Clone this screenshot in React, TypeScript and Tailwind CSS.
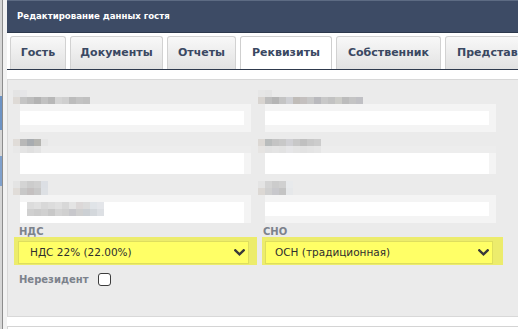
import React from "react";

function Blocks({ cells }: { cells: string[] }) {
  return (
    <div className="flex shrink-0">
      {cells.map((c, i) => (
        <div key={i} className={"w-[7px] h-[7px] " + c} />
      ))}
    </div>
  );
}

const L1a = ["bg-[#e4e4e4]", "bg-[#e6e6e8]"];
const L1b = ["bg-[#dedad6]", "bg-[#c5c5c5]", "bg-[#bdbdbd]", "bg-[#b3b3b3]", "bg-[#c1c1c1]", "bg-[#b7b7b7]", "bg-[#d4d4d4]", "bg-[#cfcfcf]", "bg-[#bcbcbc]", "bg-[#c3c3c3]", "bg-[#c0c0c0]"];
const L2a = ["bg-[#e0dcd8]", "bg-[#b8b8b8]", "bg-[#a8acb0]", "bg-[#b4b4b0]", "bg-[#e6e6e6]"];
const L2b = ["bg-[#e8e8e8]", "bg-[#e4e4e4]", "bg-[#e0e0e0]", "bg-[#e4e4e4]"];
const L3a = ["bg-[#e4e4e4]", "bg-[#d4d4d4]", "bg-[#cccccc]", "bg-[#d0d0d0]", "bg-[#dcdfe4]"];
const L3b = ["bg-[#e0dcd8]", "bg-[#c8c8c8]", "bg-[#c4c0c0]", "bg-[#c8c8c8]", "bg-[#dde0e4]"];
const T3a = ["bg-[#dcdcdc]", "bg-[#e0e0e0]", "bg-[#d8d8d8]", "bg-[#dcdcdc]", "bg-[#e0e0e0]", "bg-[#d8d8d8]", "bg-[#e4e4e4]", "bg-[#dcd8d8]", "bg-[#dcdcdc]", "bg-[#e0e4e8]", "bg-[#e4e6ea]"];
const T3b = ["bg-[#d0d0d0]", "bg-[#cccccc]", "bg-[#d0d0d0]", "bg-[#c8c8c8]", "bg-[#d4d4d4]", "bg-[#d0d0d0]", "bg-[#c8c8cc]", "bg-[#d0d0d0]", "bg-[#ccd0d4]", "bg-[#d4d8dc]", "bg-[#dde0e4]"];

const R1a = ["bg-[#e6e6e6]", "bg-[#e4e4e4]"];
const R1b = ["bg-[#d8d4d0]", "bg-[#bebebe]", "bg-[#b5b5b5]", "bg-[#c4c4c4]", "bg-[#cfd0d4]", "bg-[#c0bcb8]", "bg-[#c4c0bf]", "bg-[#c8c8c8]", "bg-[#b9b9bd]", "bg-[#c8c8c8]", "bg-[#c2c2c2]", "bg-[#ccccc8]", "bg-[#bcbcbc]", "bg-[#c4c4c4]", "bg-[#c0c0c4]"];
const R2a = ["bg-[#dcd8d4]", "bg-[#b9bcbc]", "bg-[#c4c4c4]", "bg-[#c8c8c8]", "bg-[#d0d0d4]", "bg-[#c8c8c8]", "bg-[#c0c0c0]", "bg-[#c8c8c8]", "bg-[#cccccc]"];
const R2b = ["bg-[#e6e4e2]", "bg-[#e2e2e2]", "bg-[#e4e4e4]", "bg-[#e2e2e2]", "bg-[#e6e6e8]", "bg-[#e4e4e4]", "bg-[#e2e2e2]", "bg-[#e4e4e4]", "bg-[#e6e6e6]"];
const R3a = ["bg-[#e4e4e4]", "bg-[#d4d4d4]", "bg-[#cccccc]", "bg-[#d0d0d0]", "bg-[#e8eaec]"];
const R3b = ["bg-[#dcd8d4]", "bg-[#d0d0d0]", "bg-[#c8c8cc]", "bg-[#c4c4c4]", "bg-[#e6e8ea]"];

function Chevron() {
  return (
    <svg width="11" height="7" viewBox="0 0 11 7" className="shrink-0">
      <path d="M1.3 1.3 L5.5 5.3 L9.7 1.3" fill="none" stroke="#3a3a3a" strokeWidth="2.4" strokeLinecap="square" />
    </svg>
  );
}

function Tab({ label, w, active }: { label: string; w: string; active?: boolean }) {
  if (active) {
    return (
      <div className={"relative z-10 -mb-px h-[34px] shrink-0 rounded-t-[3px] border border-b-0 border-[#cfcfcf] bg-white flex items-center justify-center text-[11px] font-bold text-[#3a4862] " + w}>
        {label}
      </div>
    );
  }
  return (
    <div className={"h-[33px] shrink-0 rounded-t-[3px] border border-b-0 border-[#d2d2d2] bg-gradient-to-b from-[#f8f8f8] to-[#e2e2e2] flex items-center text-[11px] font-bold text-[#3a4862] " + w}>
      {label}
    </div>
  );
}

export default function App() {
  return (
    <div className="w-[518px] h-[329px] bg-white flex overflow-hidden font-['DejaVu_Sans',Verdana,sans-serif]">
      {/* left page background strip */}
      <div className="w-[7px] h-full shrink-0 flex">
        <div className="w-[2px] h-full bg-[#d6d6d6] flex flex-col">
          <div className="h-[96px]" />
          <div className="h-[34px] bg-[#6d93c4]" />
          <div className="h-[26px]" />
          <div className="h-[30px] bg-[#7fa0cc]" />
        </div>
        <div className="w-px h-full bg-[#8c8c8c]" />
        <div className="w-[4px] h-full bg-[#f2f2f2]" />
      </div>

      <div className="flex-1 min-w-0 flex flex-col">
        {/* header */}
        <div className="h-[33px] shrink-0 bg-[#3d4b65] border-t border-t-[#5d6b83] border-b border-b-[#2c384c] flex items-center pl-[10px]">
          <span className="text-[8.6px] font-bold text-white leading-none">Редактирование данных гостя</span>
        </div>
        <div className="h-[3px] shrink-0" />

        {/* tabs */}
        <div className="h-[34px] shrink-0 border-b border-[#2f3a4d] flex items-end gap-[4px] pl-[3px] overflow-hidden">
          <Tab label="Гость" w="w-[56px] justify-center" />
          <Tab label="Документы" w="w-[93px] justify-center" />
          <Tab label="Отчеты" w="w-[69px] justify-center" />
          <Tab label="Реквизиты" w="w-[92px]" active />
          <Tab label="Собственник" w="w-[105px] justify-center" />
          <Tab label="Представитель" w="w-[110px] pl-[11px]" />
        </div>
        <div className="h-[9px] shrink-0" />

        {/* panel */}
        <div className="h-[238px] shrink-0 border border-[#d8d8d8] border-r-0 bg-[#ebebeb] pl-[5px] pt-[10px] flex">
          {/* left column */}
          <div className="w-[245px] shrink-0 flex flex-col">
            <Blocks cells={L1a} />
            <Blocks cells={L1b} />
            <div className="ml-[7px] w-[231px] h-[28px] bg-[#f4f4f4] pt-[7px]">
              <div className="w-[224px] h-[14px] bg-white" />
            </div>
            <div className="h-[7px]" />
            <Blocks cells={L2a} />
            <div className="flex h-[7px]">
              <Blocks cells={L2b} />
              <div className="w-[210px] h-[7px] bg-[#ededed]" />
            </div>
            <div className="ml-[7px] w-[231px] h-[21px] bg-[#f4f4f4] flex">
              <div className="w-[224px] h-[21px] bg-white" />
            </div>
            <div className="h-[7px]" />
            <Blocks cells={L3a} />
            <Blocks cells={L3b} />
            <div className="ml-[7px] w-[231px] h-[7px] bg-[#f4f4f4]" />
            <div className="ml-[7px] w-[231px] h-[21px] bg-[#f4f4f4] flex">
              <div className="w-[224px] h-[21px] bg-white pl-[7px]">
                <Blocks cells={T3a} />
                <Blocks cells={T3b} />
              </div>
            </div>
            <div className="h-[4px]" />
            <div className="ml-[6px] h-[10px] leading-[10px] text-[10px] font-bold text-[#7c828c]">НДС</div>
            <div className="ml-[1px] w-[243px] h-[28px] bg-[#ecec6c] pl-[4px] pt-[4px]">
              <div className="w-[231px] h-[23px] bg-[#ffff66] border border-[#dede5e] flex items-center justify-between pl-[11px] pr-[3px]">
                <span className="text-[10.5px] text-[#2e2e2e] leading-none">НДС 22% (22.00%)</span>
                <Chevron />
              </div>
            </div>
            <div className="mt-[8px] ml-[6px] flex items-center gap-[10px]">
              <span className="text-[10px] font-bold text-[#7c828c] leading-[13px]">Нерезидент</span>
              <div className="w-[13px] h-[13px] rounded-[3px] border border-[#3c3c3c] bg-white" />
            </div>
          </div>

          {/* right column */}
          <div className="w-[260px] shrink-0 flex flex-col">
            <Blocks cells={R1a} />
            <Blocks cells={R1b} />
            <div className="ml-[7px] w-[231px] h-[28px] bg-[#f4f4f4] pt-[7px]">
              <div className="w-[224px] h-[14px] bg-white" />
            </div>
            <div className="h-[7px]" />
            <Blocks cells={R2a} />
            <div className="flex h-[7px]">
              <Blocks cells={R2b} />
              <div className="w-[175px] h-[7px] bg-[#ededed]" />
            </div>
            <div className="ml-[7px] w-[231px] h-[21px] bg-[#f4f4f4] flex">
              <div className="w-[224px] h-[21px] bg-white" />
            </div>
            <div className="h-[7px]" />
            <Blocks cells={R3a} />
            <Blocks cells={R3b} />
            <div className="ml-[7px] w-[231px] h-[7px] bg-[#f4f4f4]" />
            <div className="ml-[7px] w-[231px] h-[21px] bg-[#f4f4f4] flex">
              <div className="w-[224px] h-[14px] bg-white" />
            </div>
            <div className="h-[4px]" />
            <div className="ml-[5px] h-[10px] leading-[10px] text-[10px] font-bold text-[#7c828c]">СНО</div>
            <div className="ml-[4px] w-[241px] h-[28px] bg-[#ecec6c] pl-[3px] pt-[4px]">
              <div className="w-[228px] h-[23px] bg-[#ffff66] border border-[#dede5e] flex items-center justify-between pl-[9px] pr-[3px]">
                <span className="text-[10.5px] text-[#2e2e2e] leading-none">ОСН (традиционная)</span>
                <Chevron />
              </div>
            </div>
          </div>
        </div>

        <div className="h-[9px] shrink-0" />
        <div className="h-[3px] shrink-0 border-t border-l border-[#d4d4d4] bg-white" />
      </div>
    </div>
  );
}
